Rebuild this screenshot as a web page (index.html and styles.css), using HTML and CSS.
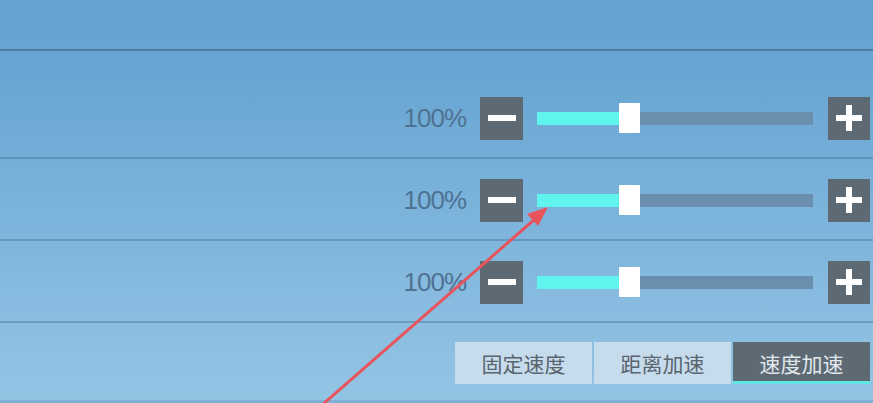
FILE: index.html
```html
<!DOCTYPE html>
<html lang="zh">
<head>
<meta charset="utf-8">
<link rel="stylesheet" href="styles.css">
</head>
<body>
<div class="page">
  <div class="header"></div>
  <div class="rows">
    <div class="row">
      <span class="pct">100%</span>
      <div class="btn"><span class="minus"></span></div>
      <div class="track"><div class="fill"></div><div class="thumb"></div></div>
      <div class="btn plus"><span class="plus-h"></span><span class="plus-v"></span></div>
    </div>
    <div class="row">
      <span class="pct">100%</span>
      <div class="btn"><span class="minus"></span></div>
      <div class="track"><div class="fill"></div><div class="thumb"></div></div>
      <div class="btn plus"><span class="plus-h"></span><span class="plus-v"></span></div>
    </div>
    <div class="row">
      <span class="pct">100%</span>
      <div class="btn"><span class="minus"></span></div>
      <div class="track"><div class="fill"></div><div class="thumb"></div></div>
      <div class="btn plus"><span class="plus-h"></span><span class="plus-v"></span></div>
    </div>
  </div>
  <div class="tabs">
    <div class="tab">固定速度</div>
    <div class="tab">距离加速</div>
    <div class="tab active">速度加速</div>
  </div>
  <svg class="arrow" width="873" height="403" viewBox="0 0 873 403">
    <line x1="322" y1="405" x2="535" y2="219" stroke="#e8545c" stroke-width="3" stroke-linecap="round"/>
    <polygon points="548,207 538,226 527,214" fill="#e8545c"/>
  </svg>
</div>
</body>
</html>
```
FILE: styles.css
```css
html, body {
  margin: 0;
  padding: 0;
}
body {
  width: 873px;
  height: 403px;
  overflow: hidden;
  font-family: "Liberation Sans", "Noto Sans CJK SC", sans-serif;
}
.page {
  position: relative;
  width: 873px;
  height: 403px;
  background: linear-gradient(to bottom, #65a2d1 0%, #6aa6d3 20%, #7ab2da 50%, #88bbdf 75%, #93c4e4 100%);
  box-sizing: border-box;
  border-bottom: 3px solid #7eaed2;
}
.header {
  height: 49px;
  border-bottom: 2px solid #4d7ea5;
}
.rows {
  padding-top: 26px;
}
.row {
  height: 80px;
  border-bottom: 2px solid rgba(70, 115, 155, 0.45);
  display: flex;
  align-items: center;
  justify-content: flex-end;
  padding-right: 3px;
}
.pct {
  font-size: 26px;
  letter-spacing: -1px;
  color: #4e7292;
  margin-right: 14px;
  padding-top: 2px;
}
.btn {
  position: relative;
  width: 43px;
  height: 43px;
  background: #5e6a73;
  display: flex;
  align-items: center;
  justify-content: center;
  margin-top: 2px;
}
.btn.plus {
  width: 42px;
}
.minus {
  width: 28px;
  height: 6px;
  background: #ffffff;
}
.plus-h {
  position: absolute;
  left: 8px;
  top: 18px;
  width: 26px;
  height: 6px;
  background: #ffffff;
}
.plus-v {
  position: absolute;
  left: 18px;
  top: 8px;
  width: 6px;
  height: 26px;
  background: #ffffff;
}
.track {
  position: relative;
  width: 276px;
  height: 13px;
  margin: 2px 15px 0 14px;
  background: #6a8fae;
}
.fill {
  width: 88px;
  height: 100%;
  background: #60f4ee;
}
.thumb {
  position: absolute;
  left: 82px;
  top: -9px;
  width: 21px;
  height: 30px;
  background: #ffffff;
  border-radius: 1px;
}
.tabs {
  display: flex;
  justify-content: flex-end;
  gap: 2px;
  padding: 19px 3px 0 0;
}
.tab {
  height: 42px;
  display: flex;
  align-items: center;
  justify-content: center;
  background: #c6dced;
  color: #59646e;
  font-size: 21px;
  font-family: "Noto Sans CJK SC", sans-serif;
  width: 137px;
  box-sizing: border-box;
}
.tab.active {
  background: #5d6a74;
  color: #e2e7eb;
  border-bottom: 3px solid #5ee6e2;
  padding-top: 3px;
}
.arrow {
  position: absolute;
  left: 0;
  top: 0;
  pointer-events: none;
}
```
